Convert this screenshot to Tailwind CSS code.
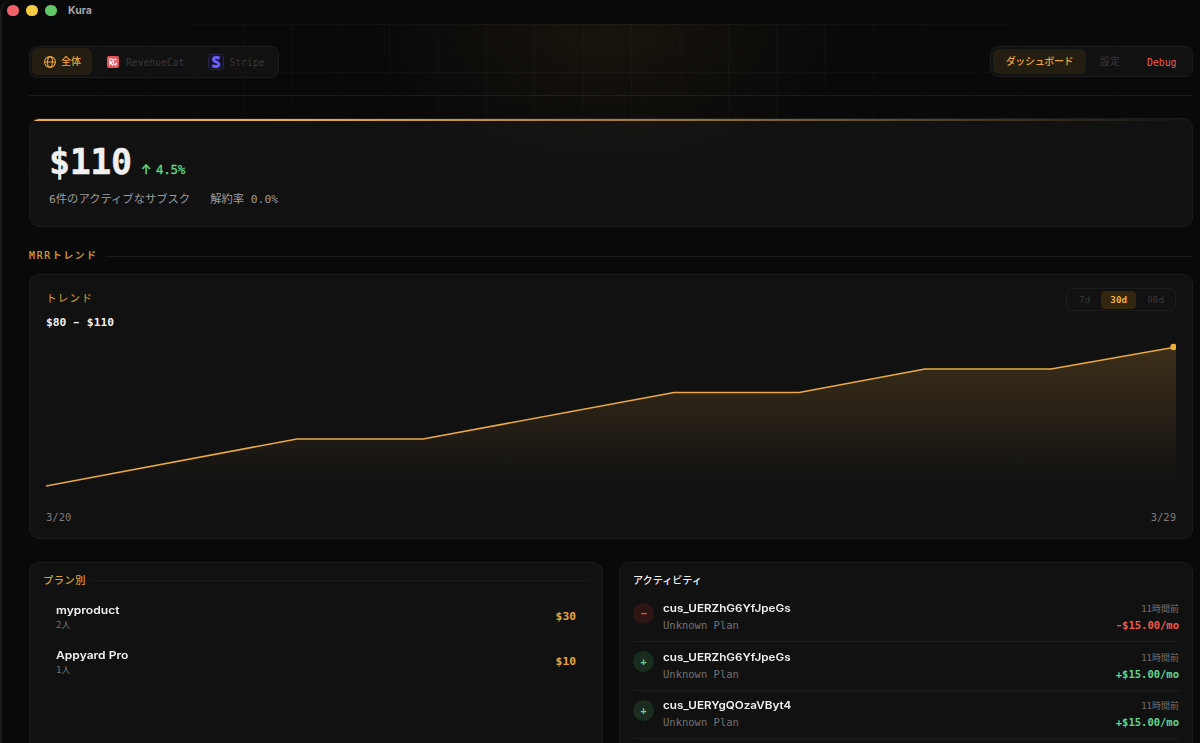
<!DOCTYPE html>
<html lang="ja">
<head>
    <meta charset="UTF-8">
    <meta name="viewport" content="width=device-width, initial-scale=1.0">
    <title>Kura</title>
    <script src="https://cdn.jsdelivr.net/npm/@tailwindcss/browser@4"></script>
</head>
<body class="bg-[#090909] text-[#f0f0f0] h-screen overflow-hidden font-['DejaVu_Sans_Mono','Noto_Sans_CJK_JP',monospace]">
<div class="relative h-screen overflow-hidden border-l-2 border-[#1c1c1c] rounded-tl-xl">

    <!-- backdrop: grid and glow -->
    <div class="absolute left-0 top-6 w-full h-[300px] bg-[linear-gradient(#ffffff08_1px,transparent_1px),linear-gradient(90deg,#ffffff08_1px,transparent_1px)] bg-[size:48.4px_48px] mask-[radial-gradient(ellipse_75%_95%_at_50%_0%,#000_20%,transparent_100%)]"></div>

    <header class="h-6 flex items-center pl-[5px] pb-[3px] gap-[7.5px]">
        <span class="size-[11.5px] rounded-full bg-[#f0616a]"></span>
        <span class="size-[11.5px] rounded-full bg-[#f6cb45]"></span>
        <span class="size-[11.5px] rounded-full bg-[#62c766]"></span>
        <span class="mt-0.5 ml-[4px] text-[10.5px] leading-none font-bold text-[#a8a8a8] font-[Inter,sans-serif]">Kura</span>
    </header>

    <main class="relative pl-[27px] pr-[7px]">
        <nav class="flex justify-between items-center pt-[21px] pb-[17px] h-[72px] border-b border-[#1a1a1a] leading-none">
            <div class="flex items-center h-8 w-[250px] rounded-lg border border-[#1c1c1c] bg-[#111111] px-0.5">
                <div class="flex items-center gap-[5px] h-[27px] w-[60px] pl-3 rounded-md bg-[#241d11] text-[#e9a53c]">
                    <svg class="size-3" viewBox="0 0 12 12" fill="none" stroke="currentColor" stroke-width="1.1"><circle cx="6" cy="6" r="5.4"/><ellipse cx="6" cy="6" rx="2.5" ry="5.4"/><path d="M.6 6h10.8"/></svg>
                    <span class="text-[10px] font-medium">全体</span>
                </div>
                <div class="flex items-center gap-[7px] ml-[15px] text-[#383838] text-[9.7px]">
                    <svg class="size-3" viewBox="0 0 12 12"><rect width="12" height="12" rx="2" fill="#e5545b"/><g fill="none" stroke="#fff" stroke-width="1.1"><path d="M2.800 9.300V3h2a1.400 1.400 0 0 1 0 2.900H3l2.800 3.400"/><path d="M9.400 4.400C9 2.600 6.500 2.700 6.500 5.200V7c0 2.800 3 2.600 3 .3H8"/></g></svg>
                    <span class="mt-0.5">RevenueCat</span>
                </div>
                <div class="flex items-center gap-[5px] ml-[24px] text-[#383838] text-[9.8px]">
                    <svg class="size-4" viewBox="0 0 16 16"><rect x=".5" y=".5" width="15" height="15" rx="3" fill="#15142c" stroke="#25234a"/><path d="M11.700 4.300C9.800 3.300 5.500 2.900 5.500 5.600 5.500 8.300 10.800 7.400 10.800 10.300 10.800 13 6.600 12.800 4.200 11.600" fill="none" stroke="#6b5ff5" stroke-width="3"/></svg>
                    <span class="mt-0.5">Stripe</span>
                </div>
            </div>
            <div class="flex items-center h-[31px] w-[203px] rounded-lg border border-[#1c1c1c] bg-[#111111] px-0.5">
                <div class="h-[25px] w-[93px] flex items-center justify-center rounded-md bg-[#241d11] text-[#e9a53c] text-[10px] font-medium tracking-[-0.35px]">ダッシュボード</div>
                <div class="ml-[14px] text-[#383838] text-[10px]">設定</div>
                <div class="mt-0.5 ml-[27px] text-[#ee5a4b] text-[9.8px]">Debug</div>
            </div>
        </nav>

        <!-- MRR summary -->
        <section class="relative mt-[22px] h-[109px] rounded-[10px] border border-[#1c1c1c] bg-[#111111] overflow-hidden pl-[19px] pt-[25px]">
            <div class="absolute inset-x-0 top-0 h-[1.5px] bg-[linear-gradient(90deg,#eeb04d_0%,#eeb04d_20%,#8a6a38_60%,#8a6a3800_100%)]"></div>
            <div class="flex items-baseline gap-2.5">
                <span class="text-[35px] leading-[36px] font-bold tracking-[-0.4px] [-webkit-text-stroke:0.4px_#f0f0f0]">$110</span>
                <span class="text-[12.5px] leading-none text-[#63d68d] font-medium tracking-[-0.3px] [-webkit-text-stroke:0.3px_#63d68d]"><span class="inline-block w-[7.2px] font-[Inter,sans-serif] -ml-px mr-px">↑</span> 4.5%</span>
            </div>
            <div class="flex gap-5 mt-3 text-[11.3px] leading-4 text-[#9c9c9c]">
                <span>6件のアクティブなサブスク</span>
                <span>解約率 0.0%</span>
            </div>
        </section>

        <div class="flex items-center gap-2 mt-[22px] h-[14px]">
            <span class="text-[9.7px] leading-none tracking-[1.8px] text-[#d9a036] font-medium [-webkit-text-stroke:0.2px_#d9a036]">MRRトレンド</span>
            <span class="flex-1 h-px bg-[#1a1a1a]"></span>
        </div>

        <section class="mt-[11px] h-[265px] rounded-[10px] border border-[#1c1c1c] bg-[#111111] px-4 pt-[13px]">
            <div class="flex justify-between">
                <div class="pt-1">
                    <div class="text-[10.5px] leading-[13px] tracking-[1.3px] text-[#d9a036]">トレンド</div>
                    <div class="mt-[11px] text-[11.3px] leading-[13px] font-bold">$80 <span class="inline-block scale-x-75">–</span> $110</div>
                </div>
                <div class="flex items-center h-[23px] w-[110px] rounded-md border border-[#1c1c1c] text-[9.3px] leading-none text-[#383838] pl-[12px]">
                    <span>7d</span>
                    <span class="ml-[11px] flex items-center justify-center h-[18px] w-[35px] rounded bg-[#33260f] text-[#f0b040] font-bold">30d</span>
                    <span class="ml-[11px]">90d</span>
                </div>
            </div>
            <svg class="block -mt-[3px] w-[1130px] h-[174px]" viewBox="46 326 1130 174">
                <defs>
                    <linearGradient id="area" x1="0" y1="347" x2="0" y2="486" gradientUnits="userSpaceOnUse">
                        <stop offset="0" stop-color="#e9a53c" stop-opacity=".2"/>
                        <stop offset="1" stop-color="#e9a53c" stop-opacity="0"/>
                    </linearGradient>
                </defs>
                <path d="M46 486L297 439H423L674 392.500H799L925 369H1051L1176 347V486Z" fill="url(#area)"/>
                <path d="M46 486L297 439H423L674 392.500H799L925 369H1051L1176 347" fill="none" stroke="#e9a945" stroke-width="1.6" stroke-linejoin="round"/>
                <circle cx="1173.500" cy="347" r="3.200" fill="#efad33"/>
            </svg>
            <div class="flex justify-between mt-[11px] text-[10.5px] leading-3 text-[#7c7c7c]">
                <span>3/20</span>
                <span>3/29</span>
            </div>
        </section>

        <div class="grid grid-cols-2 gap-4 mt-[23px]">
            <section class="h-[200px] rounded-[10px] border border-[#1c1c1c] bg-[#111111] px-[13px] pt-[11px]">
                <div class="flex items-center gap-1 h-[13px]">
                    <span class="text-[10.2px] leading-[13px] tracking-[0.6px] text-[#d9a036] font-medium">プラン別</span>
                    <span class="flex-1 h-px bg-[#1a1a1a]"></span>
                </div>
                <div class="flex justify-between items-center h-[45px] mt-[8px] px-[13px]">
                    <div>
                        <div class="font-[Inter,sans-serif] font-semibold text-[10.7px] leading-[15px] origin-left scale-x-[1.13]">myproduct</div>
                        <div class="text-[9px] leading-[15px] text-[#727272]">2人</div>
                    </div>
                    <span class="text-[11.3px] font-bold text-[#e9a53c]">$30</span>
                </div>
                <div class="flex justify-between items-center h-[45px] px-[13px]">
                    <div>
                        <div class="font-[Inter,sans-serif] font-semibold text-[10.7px] leading-[15px] origin-left scale-x-[1.13]">Appyard Pro</div>
                        <div class="text-[9px] leading-[15px] text-[#727272]">1人</div>
                    </div>
                    <span class="text-[11.3px] font-bold text-[#e9a53c]">$10</span>
                </div>
            </section>

            <section class="h-[200px] rounded-[10px] border border-[#1c1c1c] bg-[#111111] px-[13px] pt-[11px]">
                <div class="text-[10.1px] leading-[13px] font-medium">アクティビティ</div>
                <div class="mt-1.5">
                    <div class="flex items-center h-[49px] border-b border-[#1c1c1c]">
                        <span class="size-[21px] -mt-2 rounded-full bg-[#2d1614] text-[#ee5a4b] text-[10px] font-bold flex items-center justify-center">−</span>
                        <div class="ml-[9px] flex-1">
                            <div class="font-[Inter,sans-serif] font-semibold text-[10.6px] leading-4 origin-left scale-x-[1.1]">cus_UERZhG6YfJpeGs</div>
                            <div class="text-[10.5px] leading-4 text-[#727272]">Unknown Plan</div>
                        </div>
                        <div class="text-right">
                            <div class="text-[9px] leading-4 text-[#727272]">11時間前</div>
                            <div class="text-[10.5px] leading-4 font-bold text-[#ee5a4b]"><span class="inline-block scale-x-75">−</span>$15.00/mo</div>
                        </div>
                    </div>
                    <div class="flex items-center h-[48.5px] border-b border-[#1c1c1c]">
                        <span class="size-[21px] -mt-2 rounded-full bg-[#1a2b20] text-[#63d68d] text-[10px] font-bold flex items-center justify-center">+</span>
                        <div class="ml-[9px] flex-1">
                            <div class="font-[Inter,sans-serif] font-semibold text-[10.6px] leading-4 origin-left scale-x-[1.1]">cus_UERZhG6YfJpeGs</div>
                            <div class="text-[10.5px] leading-4 text-[#727272]">Unknown Plan</div>
                        </div>
                        <div class="text-right">
                            <div class="text-[9px] leading-4 text-[#727272]">11時間前</div>
                            <div class="text-[10.5px] leading-4 font-bold text-[#63d68d]">+$15.00/mo</div>
                        </div>
                    </div>
                    <div class="flex items-center h-[48.5px] border-b border-[#1c1c1c]">
                        <span class="size-[21px] -mt-2 rounded-full bg-[#1a2b20] text-[#63d68d] text-[10px] font-bold flex items-center justify-center">+</span>
                        <div class="ml-[9px] flex-1">
                            <div class="font-[Inter,sans-serif] font-semibold text-[10.6px] leading-4 origin-left scale-x-[1.1]">cus_UERYgQOzaVByt4</div>
                            <div class="text-[10.5px] leading-4 text-[#727272]">Unknown Plan</div>
                        </div>
                        <div class="text-right">
                            <div class="text-[9px] leading-4 text-[#727272]">11時間前</div>
                            <div class="text-[10.5px] leading-4 font-bold text-[#63d68d]">+$15.00/mo</div>
                        </div>
                    </div>
                </div>
            </section>
        </div>
    </main>

    <!-- glow lies over the cards as well -->
    <div class="absolute left-0 top-6 w-full h-[220px] pointer-events-none bg-[radial-gradient(ellipse_240px_150px_at_608px_0px,#e9a53c12,transparent)]"></div>
</div>
</body>
</html>
